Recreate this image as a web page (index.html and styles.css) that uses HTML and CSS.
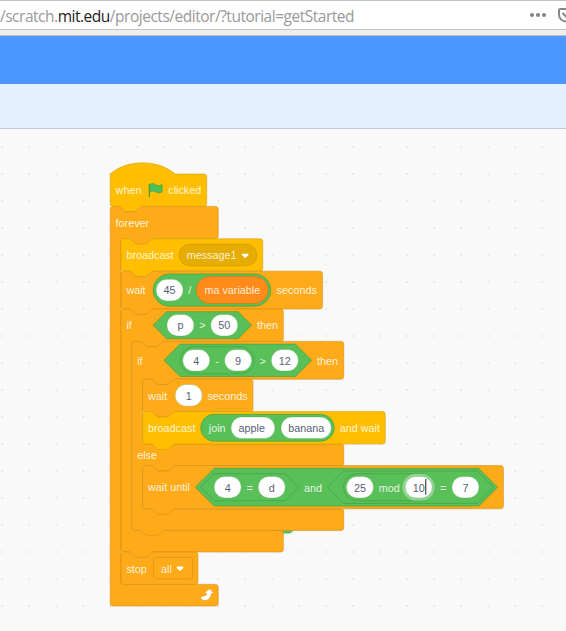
FILE: index.html
```html
<!DOCTYPE html>
<html lang="en">
<head>
<meta charset="utf-8">
<title>Scratch editor</title>
<link rel="stylesheet" href="styles.css">
</head>
<body>
<div class="toolbar">
  <div class="url"><span class="u1">/scratch.</span><span class="host">mit.edu</span><span class="u2">/projects/editor/?tutorial=getStarted</span></div>
  <svg class="tools" width="38" height="28" viewBox="528 1 38 28">
    <g fill="#858585"><circle cx="532" cy="15" r="2.1"/><circle cx="538" cy="15" r="2.1"/><circle cx="544" cy="15" r="2.1"/></g>
    <path d="M568 9h-7.500q-1.500 0-1.500 1.500v4.500a7 7 0 0 0 7 6.500h2M562.500 13l4 4 2-2" fill="none" stroke="#858585" stroke-width="2"/>
  </svg>
</div>
<div class="chrome-edge"></div>
<div class="menubar"></div>
<div class="tabs"></div>
<main class="workspace">
<svg class="canvas" width="566" height="502" viewBox="0 129 566 502">
  <defs>
    <pattern id="grid" x="1" y="146" width="27" height="27" patternUnits="userSpaceOnUse"><path d="M0.500 0h1.500v2h-1.500z" fill="#e4e4e4"/></pattern>
    <path id="caret" d="M1 0H9Q11 1 9.500 2.500L6.200 5.800Q5 6.800 3.800 5.800L.5 2.500Q-1 1 1 0Z" fill="#fff"/>
  </defs>
  <rect y="129" width="566" height="502" fill="url(#grid)"/>
  <g transform="translate(110.200 174) scale(.675)">
    <path class="op" d="M230 490H276L271 528L267 532H240Z"/>

    <!-- when flag clicked -->
    <path class="event" d="M0 0c25-22 71-22 96 0H139a4 4 0 0 1 4 4V44a4 4 0 0 1-4 4H48c-2 0-3 1-4 2l-4 4c-1 1-2 2-4 2H24c-2 0-3-1-4-2l-4-4c-1-1-2-2-4-2H4a4 4 0 0 1-4-4Z"/>
    <!-- forever -->
    <path class="control" d="M0 52a4 4 0 0 1 4-4h8c2 0 3 1 4 2l4 4c1 1 2 2 4 2h12c2 0 3-1 4-2l4-4c1-1 2-2 4-2H156a4 4 0 0 1 4 4V92a4 4 0 0 1-4 4H64c-2 0-3 1-4 2l-4 4c-1 1-2 2-4 2H40c-2 0-3-1-4-2l-4-4c-1-1-2-2-4-2H20a4 4 0 0 0-4 4V604a4 4 0 0 0 4 4H156a4 4 0 0 1 4 4V636a4 4 0 0 1-4 4H4a4 4 0 0 1-4-4Z"/>
    <!-- broadcast -->
    <path class="event" d="M16 100a4 4 0 0 1 4-4h8c2 0 3 1 4 2l4 4c1 1 2 2 4 2h12c2 0 3-1 4-2l4-4c1-1 2-2 4-2H222a4 4 0 0 1 4 4V140a4 4 0 0 1-4 4H64c-2 0-3 1-4 2l-4 4c-1 1-2 2-4 2H40c-2 0-3-1-4-2l-4-4c-1-1-2-2-4-2H20a4 4 0 0 1-4-4Z"/>
    <!-- wait -->
    <path class="control" d="M16 148a4 4 0 0 1 4-4h8c2 0 3 1 4 2l4 4c1 1 2 2 4 2h12c2 0 3-1 4-2l4-4c1-1 2-2 4-2H310.500a4 4 0 0 1 4 4V196a4 4 0 0 1-4 4H64c-2 0-3 1-4 2l-4 4c-1 1-2 2-4 2H40c-2 0-3-1-4-2l-4-4c-1-1-2-2-4-2H20a4 4 0 0 1-4-4Z"/>
    <!-- outer if -->
    <path class="control" d="M16 204a4 4 0 0 1 4-4h8c2 0 3 1 4 2l4 4c1 1 2 2 4 2h12c2 0 3-1 4-2l4-4c1-1 2-2 4-2H252.500a4 4 0 0 1 4 4V244a4 4 0 0 1-4 4H80c-2 0-3 1-4 2l-4 4c-1 1-2 2-4 2H56c-2 0-3-1-4-2l-4-4c-1-1-2-2-4-2H36a4 4 0 0 0-4 4V524a4 4 0 0 0 4 4H252.500a4 4 0 0 1 4 4V556a4 4 0 0 1-4 4H64c-2 0-3 1-4 2l-4 4c-1 1-2 2-4 2H40c-2 0-3-1-4-2l-4-4c-1-1-2-2-4-2H20a4 4 0 0 1-4-4Z"/>
    <path class="op" d="M83.500 204H189.500l20 20-20 20H83.500l-20-20Z"/>
    <!-- if else -->
    <path class="control" d="M32 252a4 4 0 0 1 4-4h8c2 0 3 1 4 2l4 4c1 1 2 2 4 2h12c2 0 3-1 4-2l4-4c1-1 2-2 4-2H342a4 4 0 0 1 4 4V300a4 4 0 0 1-4 4H96c-2 0-3 1-4 2l-4 4c-1 1-2 2-4 2H72c-2 0-3-1-4-2l-4-4c-1-1-2-2-4-2H52a4 4 0 0 0-4 4V396a4 4 0 0 0 4 4H342a4 4 0 0 1 4 4V428a4 4 0 0 1-4 4H96c-2 0-3 1-4 2l-4 4c-1 1-2 2-4 2H72c-2 0-3-1-4-2l-4-4c-1-1-2-2-4-2H52a4 4 0 0 0-4 4V492a4 4 0 0 0 4 4H342a4 4 0 0 1 4 4V524a4 4 0 0 1-4 4H80c-2 0-3 1-4 2l-4 4c-1 1-2 2-4 2H56c-2 0-3-1-4-2l-4-4c-1-1-2-2-4-2H36a4 4 0 0 1-4-4Z"/>
    <!-- wait 1 -->
    <path class="control" d="M48 308a4 4 0 0 1 4-4h8c2 0 3 1 4 2l4 4c1 1 2 2 4 2h12c2 0 3-1 4-2l4-4c1-1 2-2 4-2H207.500a4 4 0 0 1 4 4V348a4 4 0 0 1-4 4H96c-2 0-3 1-4 2l-4 4c-1 1-2 2-4 2H72c-2 0-3-1-4-2l-4-4c-1-1-2-2-4-2H52a4 4 0 0 1-4-4Z"/>
    <!-- broadcast and wait -->
    <path class="event" d="M48 356a4 4 0 0 1 4-4h8c2 0 3 1 4 2l4 4c1 1 2 2 4 2h12c2 0 3-1 4-2l4-4c1-1 2-2 4-2H403.500a4 4 0 0 1 4 4V396a4 4 0 0 1-4 4H96c-2 0-3 1-4 2l-4 4c-1 1-2 2-4 2H72c-2 0-3-1-4-2l-4-4c-1-1-2-2-4-2H52a4 4 0 0 1-4-4Z"/>
    <!-- wait until -->
    <path class="control" d="M48 436a4 4 0 0 1 4-4h8c2 0 3 1 4 2l4 4c1 1 2 2 4 2h12c2 0 3-1 4-2l4-4c1-1 2-2 4-2H578.500a4 4 0 0 1 4 4V492a4 4 0 0 1-4 4H96c-2 0-3 1-4 2l-4 4c-1 1-2 2-4 2H72c-2 0-3-1-4-2l-4-4c-1-1-2-2-4-2H52a4 4 0 0 1-4-4Z"/>
    <!-- stop -->
    <path class="control" d="M16 564a4 4 0 0 1 4-4h8c2 0 3 1 4 2l4 4c1 1 2 2 4 2h12c2 0 3-1 4-2l4-4c1-1 2-2 4-2H126a4 4 0 0 1 4 4V604a4 4 0 0 1-4 4H20a4 4 0 0 1-4-4Z"/>

    <!-- flag -->
    <path d="M58 15.500V33" stroke="#45993d" stroke-width="1.800" stroke-linecap="round"/>
    <path d="M58 15.700c4-2.700 7-1.300 9.500.3s5.500 1.500 8.800-.2q.7-.3.700.5v10.200c-3.500 2-6.500 2-9.500.2s-6-1.800-9.500.4Z" fill="#4cbf56" stroke="#45993d" stroke-width=".8"/>
    <text x="8" y="29.600">when</text><text x="86" y="29.600">clicked</text>
    <text x="8" y="78.600">forever</text>

    <text x="24" y="125.600">broadcast</text>
    <rect class="menu" x="102" y="104" width="115.500" height="32" rx="16"/>
    <text x="113.300" y="125.600">message1</text><use href="#caret" x="195" y="118"/>

    <text x="24" y="177.600">wait</text>
    <rect class="op" x="63.500" y="148" width="174.500" height="48" rx="24"/>
    <rect class="field" x="68" y="156" width="40" height="32" rx="16"/><text class="val" x="88" y="177.600">45</text>
    <text class="mid" x="118" y="177.600">/</text>
    <rect class="var" x="127.500" y="152" width="106.500" height="40" rx="20"/><text class="mid" x="181" y="177.600">ma variable</text>
    <text x="246.500" y="177.600">seconds</text>

    <text x="24" y="229.600">if</text>
    <rect class="field" x="84" y="208" width="40" height="32" rx="16"/><text class="val" x="104" y="230">p</text>
    <text class="mid" x="136.500" y="230">&gt;</text>
    <rect class="field" x="149" y="208" width="40" height="32" rx="16"/><text class="val" x="169" y="230">50</text>
    <text x="217.500" y="229.600">then</text>

    <text x="40" y="282.600">if</text>
    <path class="op" d="M103.500 252H274.500l24 24-24 24H103.500l-24-24Z"/>
    <rect class="op" x="103.500" y="256" width="110" height="40" rx="20"/>
    <rect class="field" x="107.500" y="260" width="40" height="32" rx="16"/><text class="val" x="127.500" y="282.600">4</text>
    <text class="mid" x="158.200" y="282.600">-</text>
    <rect class="field" x="169.500" y="260" width="40" height="32" rx="16"/><text class="val" x="189.500" y="282.600">9</text>
    <text class="mid" x="226" y="282.600">&gt;</text>
    <rect class="field" x="238.700" y="260" width="40" height="32" rx="16"/><text class="val" x="258.700" y="282.600">12</text>
    <text x="306.500" y="282.600">then</text>

    <text x="56" y="334.600">wait</text>
    <rect class="field" x="96.300" y="312" width="40" height="32" rx="16"/><text class="val" x="116.300" y="334.600">1</text>
    <text x="144" y="334.600">seconds</text>

    <text x="56" y="381.600">broadcast</text>
    <rect class="op" x="134" y="356" width="198" height="40" rx="20"/>
    <text x="146" y="381.600">join</text>
    <rect class="field" x="179" y="360" width="65" height="32" rx="16"/><text class="val" x="209.600" y="381.600">apple</text>
    <rect class="field" x="253" y="360" width="74.500" height="32" rx="16"/><text class="val" x="290.600" y="381.600">banana</text>
    <text x="340" y="381.600">and wait</text>
    <text x="40" y="421.600">else</text>

    <text x="56" y="469.600">wait until</text>
    <path class="op" d="M154 436H546l28 28-28 28H154l-28-28Z"/>
    <path class="op" d="M154 444H259.500l20 20-20 20H154l-20-20Z"/>
    <rect class="field" x="154" y="448" width="40" height="32" rx="16"/><text class="val" x="174" y="470.600">4</text>
    <text class="mid" x="206.600" y="470.600">=</text>
    <rect class="field" x="219.300" y="448" width="40" height="32" rx="16"/><text class="val" x="239.300" y="470.600">d</text>
    <text x="287" y="470.600">and</text>
    <path class="op" d="M346 440H543.500l24 24-24 24H346l-24-24Z"/>
    <rect class="op" x="345.500" y="444" width="135" height="40" rx="20"/>
    <rect class="field" x="350" y="448" width="40" height="32" rx="16"/><text class="val" x="370" y="470.600">25</text>
    <text x="398" y="470.600">mod</text>
    <rect class="halo" x="437" y="448" width="40" height="32" rx="16"/>
    <rect class="field" x="437" y="448" width="40" height="32" rx="16"/><text class="val" x="457" y="470.600">10</text>
    <path d="M467.500 452V475" stroke="#222" stroke-width="1.500"/>
    <text class="mid" x="493.500" y="470.600">=</text>
    <rect class="field" x="506.300" y="448" width="40" height="32" rx="16"/><text class="val" x="526.300" y="470.600">7</text>

    <text x="24" y="590.600">stop</text>
    <rect class="control" x="64" y="568" width="58" height="32" rx="4"/>
    <text x="75.300" y="590.600">all</text><use href="#caret" x="98.500" y="581.500"/>
    <path d="M134.500 628q-1-2.500 1.500-2.500c4 .3 7-1.500 7.200-4h-1.700q-2 0-.7-1.700l4.700-4.300q1.300-1 2.500 0l4.500 4.300q1.300 1.700-.7 1.700h-2c-.3 7.500-6 10.500-10.800 10.500q-3.500-.3-4.500-4Z" fill="#fff" stroke="#cf8b17" stroke-width=".6"/>
  </g>
</svg>
</main>
</body>
</html>
```

FILE: styles.css
```css
* { box-sizing: border-box; }
body { margin: 0; width: 566px; height: 631px; overflow: hidden; background: #f9f9f9; }
.toolbar { height: 30px; display: flex; align-items: center; justify-content: space-between; background: #fff; border-top: 1px solid #c6c1bd; border-bottom: 1px solid #c6c3bf; }
.url { font: 15.500px/28px "Open Sans", "Noto Sans", sans-serif; letter-spacing: -.48px; white-space: nowrap; color: #999; padding-top: 1px; }
.host { color: #222; }
.tools { flex: none; }
.chrome-edge { height: 6px; background: #f0eeec; border-bottom: 1px solid #c4c0be; }
.menubar { height: 48px; background: #4c97ff; }
.tabs { height: 45px; background: #e5f0ff; border-bottom: 1px solid #bfc9d9; }
.workspace { height: 502px; }
.canvas { display: block; }
.canvas text { font: 500 16px "Liberation Sans", Arial, sans-serif; fill: #fff; fill-opacity: .85; }
.canvas .mid { text-anchor: middle; }
.canvas .val { text-anchor: middle; fill: #575e75; fill-opacity: 1; }
.event { fill: #ffbf00; stroke: #cc9900; stroke-opacity: .8; }
.control { fill: #ffab19; stroke: #cf8b17; stroke-opacity: .85; }
.op { fill: #59c059; stroke: #389438; stroke-opacity: .75; }
.var { fill: #ff8c1a; stroke: #db6e00; stroke-opacity: .85; }
.menu { fill: #e6ac00; stroke: #cc9900; }
.field { fill: #fff; stroke: #389438; stroke-opacity: .4; }
.halo { fill: none; stroke: #fff; stroke-opacity: .35; stroke-width: 8; }
```
